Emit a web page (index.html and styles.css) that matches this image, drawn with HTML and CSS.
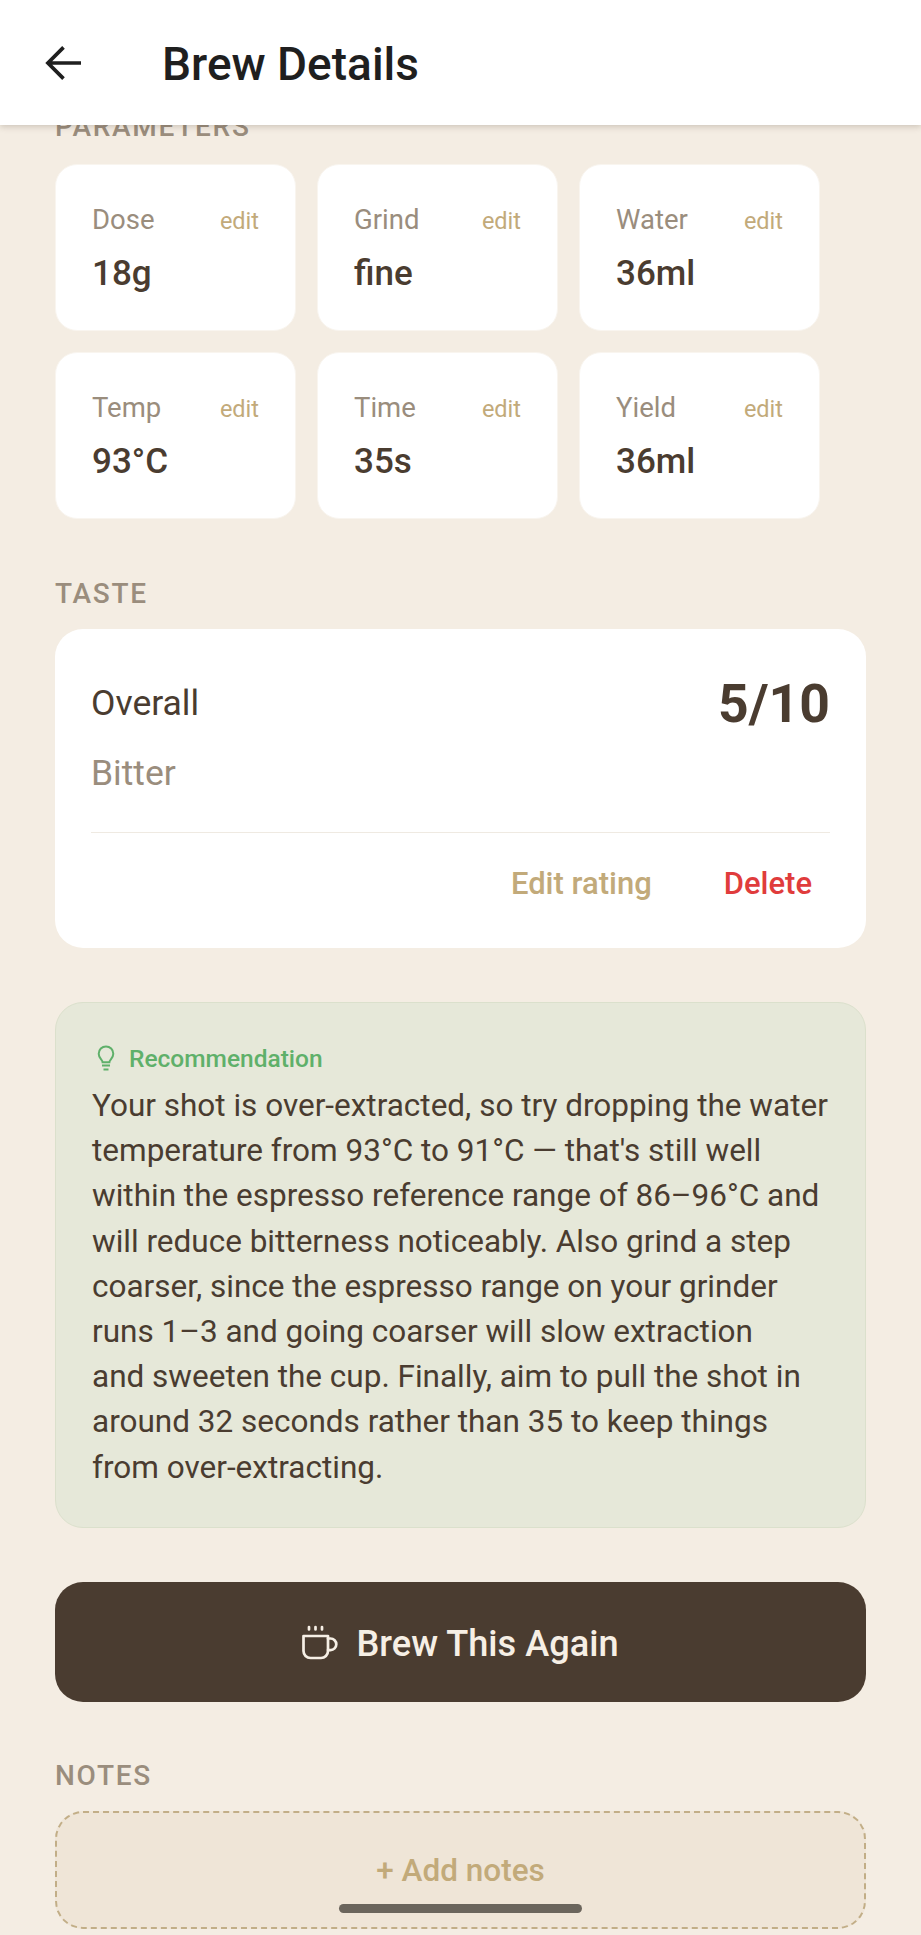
FILE: index.html
```html
<!DOCTYPE html>
<html lang="en">
<head>
  <meta charset="UTF-8" />
  <meta name="viewport" content="width=device-width, initial-scale=1.0"/>
  <title>Brew Details</title>
  <link rel="stylesheet" href="styles.css">
</head>
<body>
  <header class="topbar">
    <svg class="back" viewBox="0 0 38 36" fill="none" stroke="#1f1f1f" stroke-width="3.8" aria-hidden="true">
      <path d="M37 18H3M19 2 3 18l16 16"/>
    </svg>
    <h1>Brew Details</h1>
  </header>

  <main class="content">
    <h2 class="section first">PARAMETERS</h2>
    <div class="params">
      <div class="param"><div class="param-top"><span>Dose</span><a>edit</a></div><div class="param-value">18g</div></div>
      <div class="param"><div class="param-top"><span>Grind</span><a>edit</a></div><div class="param-value">fine</div></div>
      <div class="param"><div class="param-top"><span>Water</span><a>edit</a></div><div class="param-value">36ml</div></div>
      <div class="param"><div class="param-top"><span>Temp</span><a>edit</a></div><div class="param-value">93°C</div></div>
      <div class="param"><div class="param-top"><span>Time</span><a>edit</a></div><div class="param-value">35s</div></div>
      <div class="param"><div class="param-top"><span>Yield</span><a>edit</a></div><div class="param-value">36ml</div></div>
    </div>

    <h2 class="section taste-title">TASTE</h2>
    <section class="taste">
      <div class="taste-row">
        <span class="overall">Overall</span>
        <span class="score">5/10</span>
      </div>
      <div class="flavor">Bitter</div>
      <div class="taste-actions">
        <a class="edit-rating">Edit rating</a>
        <a class="delete">Delete</a>
      </div>
    </section>

    <section class="rec">
      <div class="rec-head">
        <svg class="bulb" viewBox="0 0 18 26" fill="none" stroke="#5fb06a" stroke-width="2" aria-hidden="true">
          <path d="M5.600 17.200c0-2.400-3.900-4-3.900-8.500a7.300 7.300 0 0 1 14.600 0c0 4.500-3.900 6.100-3.900 8.500z"/>
          <path d="M5 20.600h8M6.500 24.400h5"/>
        </svg>
        <span>Recommendation</span>
      </div>
      <p>Your shot is over-extracted, so try dropping the water temperature from 93°C to 91°C — that's still well within the espresso reference range of 86–96°C and will reduce bitterness noticeably. Also grind a step coarser, since the espresso range on your grinder runs 1–3 and going coarser will slow extraction<br>and sweeten the cup. Finally, aim to pull the shot in around 32 seconds rather than 35 to keep things from over-extracting.</p>
    </section>

    <button class="brew">
      <svg class="cup" viewBox="0 0 36 36" fill="none" stroke="#f6efe5" stroke-width="2.700" stroke-linecap="round" stroke-linejoin="round" aria-hidden="true">
        <path d="M7 2v2.500M13.500 2v2.500M20 2v2.500"/>
        <path d="M1.500 11h24.500v15a7 7 0 0 1-7 7H8.500a7 7 0 0 1-7-7z"/>
        <path d="M26 13.500h2.500a5.800 5.800 0 0 1 0 11.600H26"/>
      </svg>
      Brew This Again
    </button>

    <h2 class="section notes-title">NOTES</h2>
    <div class="notes">+ Add notes</div>
  </main>

  <div class="home-bar"></div>
</body>
</html>
```

FILE: styles.css
```css
html, body {
  margin: 0;
  height: 1935px;
  overflow: hidden;
}
body {
  position: relative;
  font-family: Roboto, "Liberation Sans", sans-serif;
  background: #f4ede3;
  color: #4a3c30;
}
.topbar {
  position: relative;
  z-index: 2;
  height: 125px;
  background: #fff;
  box-shadow: 0 2px 6px rgba(74,59,46,0.22);
  display: flex;
  align-items: center;
  padding-left: 45px;
}
.back {
  width: 37px;
  height: 36px;
}
.topbar h1 {
  margin: 3px 0 0 80px;
  font-size: 46px;
  font-weight: 500;
  color: #1f1f1f;
}
.content {
  padding: 0 55px;
  margin-top: -14px;
}
.section {
  margin: 0;
  font-size: 28px;
  line-height: 32px;
  font-weight: 500;
  letter-spacing: 1.7px;
  color: #9a8d7d;
}
.section.first {
  margin-bottom: 21px;
}
.params {
  display: grid;
  grid-template-columns: repeat(3, 241px);
  gap: 21px;
}
.param {
  height: 167px;
  box-sizing: border-box;
  background: #fff;
  border: 1px solid #f9f5ef;
  border-radius: 22px;
  padding: 39px 36px 0 36px;
}
.param-top {
  display: flex;
  justify-content: space-between;
  align-items: baseline;
  font-size: 27.500px;
  line-height: 32px;
  color: #9a8d7d;
}
.param-top a {
  font-size: 23.500px;
  color: #c2aa7a;
}
.param-value {
  margin-top: 17px;
  font-size: 35px;
  line-height: 40px;
  font-weight: 500;
}
.taste-title {
  margin-top: 59px;
  margin-bottom: 19px;
}
.taste {
  height: 319px;
  box-sizing: border-box;
  background: #fff;
  border-radius: 28px;
  padding: 44px 36px 0;
}
.taste-row {
  display: flex;
  justify-content: space-between;
  align-items: center;
  height: 60px;
}
.overall {
  font-size: 35.500px;
}
.score {
  font-size: 53.500px;
  font-weight: 700;
}
.flavor {
  margin-top: 19px;
  font-size: 35.500px;
  line-height: 42px;
  color: #9a8d7d;
}
.taste-actions {
  margin-top: 38px;
  padding-top: 31px;
  border-top: 1px solid #efeae2;
  display: flex;
  justify-content: flex-end;
  gap: 72px;
  padding-right: 18px;
  font-size: 31px;
  line-height: 40px;
  font-weight: 500;
}
.edit-rating {
  color: #c2aa7a;
}
.delete {
  color: #e03c3c;
}
.rec {
  margin-top: 54px;
  box-sizing: border-box;
  height: 526px;
  background: #e6e8d9;
  border: 1px solid #dbe0cc;
  border-radius: 28px;
  padding: 38px 30px 0 36px;
}
.rec-head {
  display: flex;
  align-items: center;
  gap: 14px;
  height: 34px;
  padding-left: 5px;
  font-size: 24.500px;
  font-weight: 500;
  color: #5fb06a;
}
.bulb {
  width: 18px;
  height: 26px;
}
.rec p {
  margin: 8px 0 0;
  font-size: 31.500px;
  line-height: 45.200px;
}
.brew {
  margin-top: 54px;
  width: 100%;
  height: 120px;
  border: 0;
  border-radius: 28px;
  background: #4a3c30;
  color: #f6efe5;
  font-family: inherit;
  font-size: 36.200px;
  font-weight: 500;
  display: flex;
  align-items: center;
  justify-content: center;
  gap: 18px;
  padding-top: 3px;
}
.cup {
  width: 36px;
  height: 36px;
}
.notes-title {
  margin-top: 58px;
  margin-bottom: 19px;
}
.notes {
  box-sizing: border-box;
  height: 118px;
  background: #efe5d7;
  border: 2px dashed #c2ae87;
  border-radius: 28px;
  padding-top: 38px;
  text-align: center;
  font-size: 31.500px;
  line-height: 40px;
  font-weight: 500;
  color: #c2aa7a;
}
.home-bar {
  position: absolute;
  left: 339px;
  top: 1904px;
  width: 243px;
  height: 9px;
  border-radius: 5px;
  background: #6b655c;
}
```
